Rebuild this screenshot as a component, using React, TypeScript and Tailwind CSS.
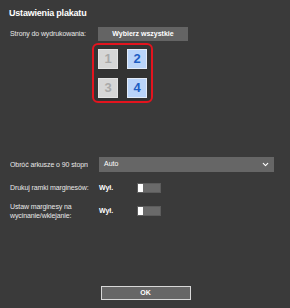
import { ChevronDown } from "lucide-react";

function Cell({ n, on }: { n: number; on: boolean }) {
  return (
    <div
      className={
        on
          ? "flex h-[20px] w-[20px] items-center justify-center border border-[#e3ecf9] bg-[#b9d4fa] text-[13px] font-bold text-[#1d5ec4]"
          : "flex h-[20px] w-[20px] items-center justify-center border border-[#e4e4e4] bg-[#d6d6d6] text-[13px] font-bold text-[#a9a9a9]"
      }
    >
      {n}
    </div>
  );
}

function Toggle() {
  return (
    <div className="flex h-[10px] w-[24px] border border-[#5c5c5c] bg-[#6a6a6a]">
      <div className="h-full w-[5px] bg-white" />
    </div>
  );
}

export default function App() {
  return (
    <div
      className="flex h-[308px] w-[290px] flex-col bg-[#3a3a3a] pt-[6px] text-[#e8e8e8]"
      style={{ fontFamily: '"Liberation Sans", Arial, sans-serif' }}
    >
      <h1 className="pl-[9px] text-[9px] font-bold leading-[14px] tracking-[-0.2px] text-white">
        Ustawienia plakatu
      </h1>

      <div className="mt-[7px] flex items-center pl-[10px]">
        <span className="w-[88px] whitespace-nowrap text-[7px] leading-[14px] tracking-[-0.1px]">
          Strony do wydrukowania:
        </span>
        <button
          type="button"
          className="h-[14px] w-[90px] bg-[#646464] text-[7px] font-bold leading-[14px] text-white"
        >
          Wybierz wszystkie
        </button>
      </div>

      <div className="ml-[92px] mt-[2px] flex h-[60px] w-[61px] items-center justify-center rounded-[6px] border-2 border-[#e3141e] bg-[#333333]">
        <div className="grid grid-cols-2 gap-[9px]">
          <Cell n={1} on={false} />
          <Cell n={2} on />
          <Cell n={3} on={false} />
          <Cell n={4} on />
        </div>
      </div>

      <div className="mt-[54px] flex items-center pl-[10px]">
        <span className="w-[78px] overflow-hidden whitespace-nowrap text-[7px] leading-[15px] tracking-[-0.1px]">
          Obróć arkusze o 90 stopni:
        </span>
        <div className="ml-[11px] flex h-[15px] w-[175px] items-center justify-between bg-[#666666] pl-[5px] pr-[4px]">
          <span className="text-[7px] text-white">Auto</span>
          <ChevronDown className="h-[9px] w-[9px] text-white" strokeWidth={3} />
        </div>
      </div>

      <div className="mt-[11px] flex items-center pl-[10px]">
        <span className="w-[89px] whitespace-nowrap text-[7px] leading-[10px] tracking-[-0.1px]">
          Drukuj ramki marginesów:
        </span>
        <span className="w-[38px] text-[7px] font-bold leading-[10px] text-white">Wył.</span>
        <Toggle />
      </div>

      <div className="mt-[9px] flex items-center pl-[10px]">
        <span className="w-[89px] text-[7px] leading-[9px] tracking-[-0.1px]">
          Ustaw marginesy na
          <br />
          wycinanie/wklejanie:
        </span>
        <span className="w-[38px] text-[7px] font-bold leading-[10px] text-white">Wył.</span>
        <Toggle />
      </div>

      <div className="mb-[8px] mt-auto flex justify-center">
        <button
          type="button"
          className="ml-[1px] h-[14px] w-[90px] border border-[#d8d8d8] bg-[#666666] text-[7px] font-bold leading-[12px] text-white"
        >
          OK
        </button>
      </div>
    </div>
  );
}
